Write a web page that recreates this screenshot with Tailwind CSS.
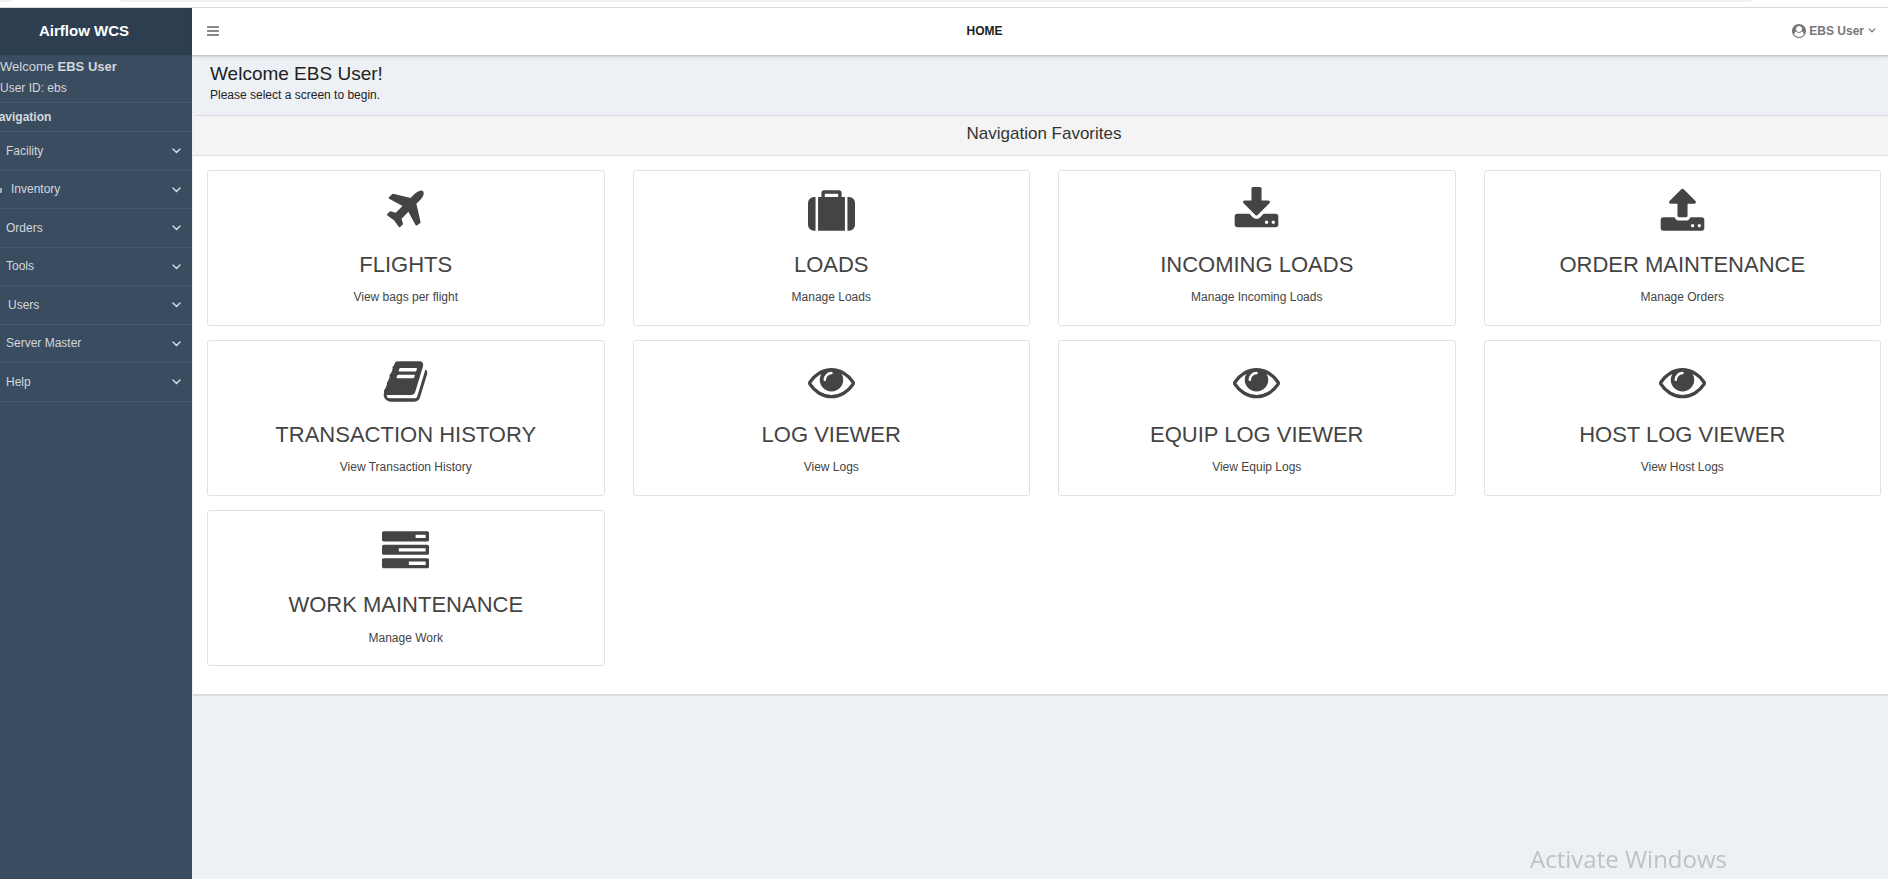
<!DOCTYPE html>
<html lang="en">
<head>
<meta charset="utf-8">
<meta name="viewport" content="width=device-width, initial-scale=1">
<title>Airflow WCS - Home</title>
<script src="https://cdn.jsdelivr.net/npm/@tailwindcss/browser@4"></script>
</head>
<body class="flex min-h-screen flex-col bg-[#edf0f5] font-['Liberation_Sans',Arial,sans-serif] text-xs text-[#222]">

<svg class="hidden" aria-hidden="true">
  <symbol id="chevron" viewBox="0 0 9 6"><path d="M1 1l3.500 3.500L8 1" fill="none" stroke="currentColor" stroke-width="1.500" stroke-linecap="round"/></symbol>
  <symbol id="plane" viewBox="0 0 1792 1792"><path d="M1568 160q44 52 12 148t-108 172l-161 161 160 696q5 19-12 33l-128 96q-7 6-19 6-4 0-7-1-15-3-21-16l-279-508-259 259 53 194q5 17-8 31l-96 96q-9 9-23 9h-2q-15-2-24-13l-189-252-252-189q-11-7-13-23-1-13 9-25l96-97q9-9 23-9 6 0 8 1l194 53 259-259-508-279q-14-8-17-24-2-16 9-27l128-128q14-13 30-8l665 159 160-160q76-76 172-108t148 12z"/></symbol>
  <symbol id="suitcase" viewBox="0 0 1792 1792"><path d="M640 384h512v-128h-512v128zm-352 0v1280h-64q-92 0-158-66t-66-158v-832q0-92 66-158t158-66h64zm1120 0v1280h-1024v-1280h128v-160q0-40 28-68t68-28h576q40 0 68 28t28 68v160h128zm384 224v832q0 92-66 158t-158 66h-64v-1280h64q92 0 158 66t66 158z"/></symbol>
  <symbol id="download" viewBox="0 0 1792 1792"><path d="M1344 1344q0-26-19-45t-45-19-45 19-19 45 19 45 45 19 45-19 19-45zm256 0q0-26-19-45t-45-19-45 19-19 45 19 45 45 19 45-19 19-45zm128-224v320q0 40-28 68t-68 28h-1472q-40 0-68-28t-28-68v-320q0-40 28-68t68-28h465l135 136q58 56 136 56t136-56l136-136h464q40 0 68 28t28 68zm-325-569q17 41-14 70l-448 448q-18 19-45 19t-45-19l-448-448q-31-29-14-70 17-39 59-39h256v-448q0-26 19-45t45-19h256q26 0 45 19t19 45v448h256q42 0 59 39z"/></symbol>
  <symbol id="upload" viewBox="0 0 1792 1792"><path d="M1344 1472q0-26-19-45t-45-19-45 19-19 45 19 45 45 19 45-19 19-45zm256 0q0-26-19-45t-45-19-45 19-19 45 19 45 45 19 45-19 19-45zm128-224v320q0 40-28 68t-68 28h-1472q-40 0-68-28t-28-68v-320q0-40 28-68t68-28h427q21 56 70.500 92t110.500 36h256q61 0 110.500-36t70.500-92h427q40 0 68 28t28 68zm-325-648q-17 40-59 40h-256v448q0 26-19 45t-45 19h-256q-26 0-45-19t-19-45v-448h-256q-42 0-59-40-17-39 14-69l448-448q18-19 45-19t45 19l448 448q31 30 14 69z"/></symbol>
  <symbol id="book" viewBox="0 0 1792 1792"><path d="M1703 478q40 57 18 129l-275 906q-19 64-76.500 107.500t-122.500 43.500h-923q-77 0-148.500-53.500t-99.500-131.500q-24-67-2-127 0-4 3-27t4-37q1-8-3-21.500t-3-19.500q2-11 8-21t16.500-23.500 16.500-23.500q23-38 45-91.500t30-91.500q3-10 .5-30t-.5-28q3-11 17-28t17-23q21-36 42-92t25-90q1-9-2.500-32t.5-28q4-13 22-30.500t22-22.500q19-26 42.500-84.500t27.500-96.500q1-8-3-25.500t-2-26.500q2-8 9-18t18-23 17-21q8-12 16.500-30.500t15-35 16-36 19.500-32 26.500-23.500 36-11.500 47.500 5.500l-1 3q38-9 51-9h761q74 0 114 56t18 130l-274 906q-36 119-71.500 153.500t-128.500 34.500h-869q-27 0-38 15-11 16-1 43 24 70 144 70h923q29 0 56-15.500t35-41.500l300-987q7-22 5-57 38 15 59 43zm-1064 2q-4 13 2 22.500t20 9.500h608q13 0 25.500-9.500t16.500-22.500l21-64q4-13-2-22.500t-20-9.500h-608q-13 0-25.500 9.500t-16.500 22.500zm-83 256q-4 13 2 22.500t20 9.500h608q13 0 25.500-9.500t16.500-22.500l21-64q4-13-2-22.500t-20-9.500h-608q-13 0-25.500 9.500t-16.500 22.500z"/></symbol>
  <symbol id="eye" viewBox="0 0 1792 1792"><path d="M1664 960q-152-236-381-353 61 104 61 225 0 185-131.500 316.500t-316.500 131.500-316.500-131.500-131.500-316.500q0-121 61-225-229 117-381 353 133 205 333.500 326.500t434.500 121.500 434.500-121.500 333.500-326.500zm-720-384q0-20-14-34t-34-14q-125 0-214.500 89.500t-89.500 214.500q0 20 14 34t34 14 34-14 14-34q0-86 61-147t147-61q20 0 34-14t14-34zm848 384q0 34-20 69-140 230-376.500 368.500t-499.500 138.500-499.500-139-376.500-368q-20-35-20-69t20-69q140-229 376.500-368t499.500-139 499.500 139 376.500 368q20 35 20 69z"/></symbol>
  <symbol id="tasks" viewBox="0 0 1792 1792"><path d="M1024 1408h640v-128h-640v128zm-384-512h1024v-128h-1024v128zm640-512h384v-128h-384v128zm512 832v256q0 26-19 45t-45 19h-1664q-26 0-45-19t-19-45v-256q0-26 19-45t45-19h1664q26 0 45 19t19 45zm0-512v256q0 26-19 45t-45 19h-1664q-26 0-45-19t-19-45v-256q0-26 19-45t45-19h1664q26 0 45 19t19 45zm0-512v256q0 26-19 45t-45 19h-1664q-26 0-45-19t-19-45v-256q0-26 19-45t45-19h1664q26 0 45 19t19 45z"/></symbol>
  <symbol id="user" viewBox="0 0 1792 1792"><path d="M1523 1339q-22-155-87.500-257.500t-184.500-118.500q-67 74-159.500 115.500t-195.500 41.500-195.500-41.500-159.500-115.500q-119 16-184.500 118.500t-87.500 257.500q106 150 271 237.500t356 87.500 356-87.500 271-237.500zm-243-699q0-159-112.500-271.500t-271.500-112.500-271.500 112.500-112.500 271.500 112.500 271.500 271.500 112.500 271.500-112.500 112.500-271.500zm512 256q0 182-71 347.500t-190.500 286-285.500 191.500-349 71q-182 0-348-71t-286-191-191-286-71-348 71-348 191-286 286-191 348-71 348 71 286 191 191 286 71 348z"/></symbol>
</svg>

<!-- Lower edge of the browser toolbar -->
<div class="flex h-2 items-start justify-between border-b border-[#dadada] bg-white">
  <div class="h-[2px] w-3 rounded-br-full bg-[#f1f1f1]"></div>
  <div class="mr-[136px] ml-[108px] h-[2px] flex-1 rounded-b-full bg-[#f1f1f1]"></div>
</div>

<div class="flex flex-1">
  <aside class="w-48 shrink-0 overflow-hidden bg-[#3a4c60] text-[#d3d8dc]">
    <div class="h-[47px] bg-[#2d3e50] pr-6 text-center text-[15px] leading-[46px] font-bold text-white">Airflow WCS</div>
    <div class="border-b border-[#455a6b] pt-[2px] pb-1">
      <p class="text-[13px] leading-5">Welcome <b>EBS User</b></p>
      <p class="pt-px leading-5">User ID: ebs</p>
    </div>
    <h2 class="-ml-[10px] border-b border-[#455a6b] leading-7 font-bold">Navigation</h2>
    <nav class="flex flex-col">
      <button class="flex items-center justify-between border-b border-[#455a6b] pr-[11px] pl-[6px] leading-[38px] even:leading-[37px]"><span>Facility</span><svg class="h-[6px] w-[9px]"><use href="#chevron"/></svg></button>
      <button class="flex items-center justify-between border-b border-[#455a6b] pr-[11px] leading-[38px] even:leading-[37px]"><span class="flex items-center gap-[9px]"><svg class="h-[6px] w-[2px]" viewBox="0 0 2 6"><path d="M0 1h1q1 0 1 1v3q0 1-1 1H0z" fill="currentColor" opacity=".7"/></svg>Inventory</span><svg class="h-[6px] w-[9px]"><use href="#chevron"/></svg></button>
      <button class="flex items-center justify-between border-b border-[#455a6b] pr-[11px] pl-[6px] leading-[38px] even:leading-[37px]"><span>Orders</span><svg class="h-[6px] w-[9px]"><use href="#chevron"/></svg></button>
      <button class="flex items-center justify-between border-b border-[#455a6b] pr-[11px] pl-[6px] leading-[38px] even:leading-[37px]"><span>Tools</span><svg class="h-[6px] w-[9px]"><use href="#chevron"/></svg></button>
      <button class="flex items-center justify-between border-b border-[#455a6b] pr-[11px] pl-2 leading-[38px] even:leading-[37px]"><span>Users</span><svg class="h-[6px] w-[9px]"><use href="#chevron"/></svg></button>
      <button class="flex items-center justify-between border-b border-[#455a6b] pr-[11px] pl-[6px] leading-[38px] even:leading-[37px]"><span>Server Master</span><svg class="h-[6px] w-[9px]"><use href="#chevron"/></svg></button>
      <button class="flex items-center justify-between border-b border-[#455a6b] pr-[11px] pl-[6px] leading-[38px] even:leading-[37px]"><span>Help</span><svg class="h-[6px] w-[9px]"><use href="#chevron"/></svg></button>
    </nav>
  </aside>

  <div class="flex min-w-0 flex-1 flex-col">
    <header class="grid h-12 grid-cols-3 items-center border-b border-[#c8cacc] bg-white pr-3 pb-[2px] pl-[15px] font-bold text-[#777] shadow-[0_1px_2px_rgba(0,0,0,0.15)]">
      <button class="justify-self-start text-[#888]" aria-label="Toggle menu"><svg class="h-[10px] w-3" viewBox="0 0 12 10" fill="currentColor"><rect width="12" height="2" rx=".5"/><rect y="4" width="12" height="2" rx=".5"/><rect y="8" width="12" height="2" rx=".5"/></svg></button>
      <h1 class="justify-self-center pr-[114px] text-[#222]">HOME</h1>
      <button class="flex items-center gap-[3px] justify-self-end"><svg class="size-[14px] fill-current"><use href="#user"/></svg>EBS User<svg class="ml-px h-[5px] w-2"><use href="#chevron"/></svg></button>
    </header>

    <main class="pl-px">
      <div class="px-[17px] pt-[6px] pb-[11px]">
        <h2 class="text-[19px] leading-6">Welcome EBS User!</h2>
        <p class="leading-[18px]">Please select a screen to begin.</p>
      </div>
      <section class="rounded-tl-sm border-t border-b border-[#dadcde] bg-white shadow-[0_1px_1px_rgba(0,0,0,0.08)]">
        <h2 class="rounded-tl-sm border-b border-[#e0e0e0] bg-[#f4f4f4] pb-[3px] pl-[7px] text-center text-[17px] leading-9 text-[#333]">Navigation Favorites</h2>
        <div class="grid grid-cols-4 gap-x-7 gap-y-[14px] pt-[14px] pr-[7px] pb-7 pl-[14px] text-center text-[#444]">
          <a href="#flights" class="flex flex-col items-center rounded-[3px] border border-[#e2e2e2] pt-4 pb-[19px]"><svg class="size-[47px] fill-current"><use href="#plane"/></svg><h3 class="mt-[17px] text-[22px] leading-7">FLIGHTS</h3><p class="mt-[9px] leading-[18px]">View bags per flight</p></a>
          <a href="#loads" class="flex flex-col items-center rounded-[3px] border border-[#e2e2e2] pt-4 pb-[19px]"><svg class="size-[47px] fill-current"><use href="#suitcase"/></svg><h3 class="mt-[17px] text-[22px] leading-7">LOADS</h3><p class="mt-[9px] leading-[18px]">Manage Loads</p></a>
          <a href="#incoming" class="flex flex-col items-center rounded-[3px] border border-[#e2e2e2] pt-4 pb-[19px]"><svg class="size-[47px] fill-current"><use href="#download"/></svg><h3 class="mt-[17px] text-[22px] leading-7">INCOMING LOADS</h3><p class="mt-[9px] leading-[18px]">Manage Incoming Loads</p></a>
          <a href="#orders" class="flex flex-col items-center rounded-[3px] border border-[#e2e2e2] pt-4 pb-[19px]"><svg class="size-[47px] fill-current"><use href="#upload"/></svg><h3 class="mt-[17px] text-[22px] leading-7">ORDER MAINTENANCE</h3><p class="mt-[9px] leading-[18px]">Manage Orders</p></a>
          <a href="#transactions" class="flex flex-col items-center rounded-[3px] border border-[#e2e2e2] pt-[17px] pb-[19px]"><svg class="size-[47px] fill-current"><use href="#book"/></svg><h3 class="mt-4 text-[22px] leading-7">TRANSACTION HISTORY</h3><p class="mt-[9px] leading-[18px]">View Transaction History</p></a>
          <a href="#logs" class="flex flex-col items-center rounded-[3px] border border-[#e2e2e2] pt-[17px] pb-[19px]"><svg class="size-[47px] fill-current"><use href="#eye"/></svg><h3 class="mt-4 text-[22px] leading-7">LOG VIEWER</h3><p class="mt-[9px] leading-[18px]">View Logs</p></a>
          <a href="#equip-logs" class="flex flex-col items-center rounded-[3px] border border-[#e2e2e2] pt-[17px] pb-[19px]"><svg class="size-[47px] fill-current"><use href="#eye"/></svg><h3 class="mt-4 text-[22px] leading-7">EQUIP LOG VIEWER</h3><p class="mt-[9px] leading-[18px]">View Equip Logs</p></a>
          <a href="#host-logs" class="flex flex-col items-center rounded-[3px] border border-[#e2e2e2] pt-[17px] pb-[19px]"><svg class="size-[47px] fill-current"><use href="#eye"/></svg><h3 class="mt-4 text-[22px] leading-7">HOST LOG VIEWER</h3><p class="mt-[9px] leading-[18px]">View Host Logs</p></a>
          <a href="#work" class="flex flex-col items-center rounded-[3px] border border-[#e2e2e2] pt-[17px] pb-[18px]"><svg class="size-[47px] fill-current"><use href="#tasks"/></svg><h3 class="mt-4 text-[22px] leading-7">WORK MAINTENANCE</h3><p class="mt-[10px] leading-[18px]">Manage Work</p></a>
        </div>
      </section>
    </main>
  </div>
</div>

<!-- System watermark over the page -->
<p class="pointer-events-none fixed right-[161px] bottom-1 font-['Open_Sans','Noto_Sans',sans-serif] text-2xl text-[#bfc1c4]">Activate Windows</p>
</body>
</html>
